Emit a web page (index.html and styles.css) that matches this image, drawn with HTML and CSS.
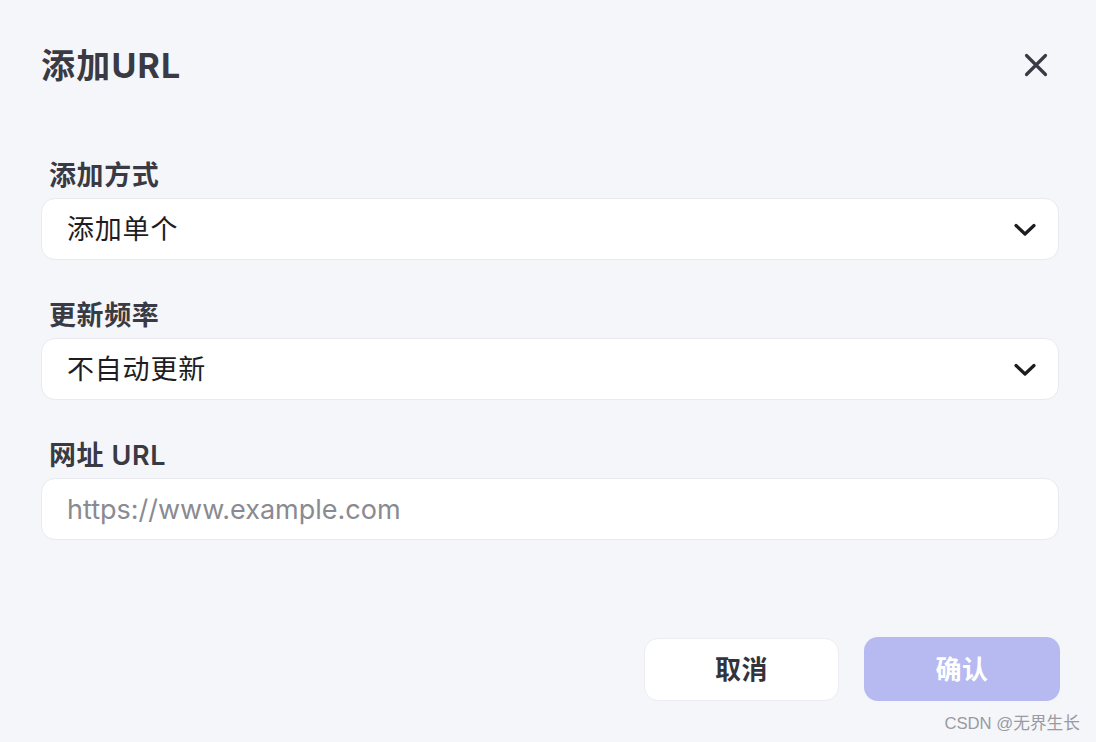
FILE: index.html
```html
<!DOCTYPE html>
<html lang="zh">
<head>
<meta charset="utf-8">
<link rel="stylesheet" href="styles.css">
</head>
<body>
<div class="dialog">
  <div class="header">
    <h1 class="title">添加URL</h1>
    <button class="close" aria-label="关闭">
      <svg width="24" height="24" viewBox="0 0 24 24"><path d="M2.5 2.5 L21.5 21.5 M21.5 2.5 L2.5 21.5" stroke="#3a3a44" stroke-width="3.2" stroke-linecap="round" fill="none"/></svg>
    </button>
  </div>
  <div class="form">
    <div class="field">
      <div class="label">添加方式</div>
      <div class="control select">
        <span class="value">添加单个</span>
        <svg class="chev" width="22" height="14" viewBox="0 0 22 14"><path d="M2 2.5 L11 11 L20 2.5" stroke="#1c1c20" stroke-width="3.2" stroke-linecap="round" stroke-linejoin="round" fill="none"/></svg>
      </div>
    </div>
    <div class="field">
      <div class="label">更新频率</div>
      <div class="control select">
        <span class="value">不自动更新</span>
        <svg class="chev" width="22" height="14" viewBox="0 0 22 14"><path d="M2 2.5 L11 11 L20 2.5" stroke="#1c1c20" stroke-width="3.2" stroke-linecap="round" stroke-linejoin="round" fill="none"/></svg>
      </div>
    </div>
    <div class="field">
      <div class="label">网址 URL</div>
      <div class="control input">
        <span class="placeholder">https://www.example.com</span>
      </div>
    </div>
  </div>
  <div class="footer">
    <button class="btn cancel">取消</button>
    <button class="btn confirm">确认</button>
  </div>
  <div class="watermark">CSDN @无界生长</div>
</div>
</body>
</html>
```
FILE: styles.css
```css
html, body {
  margin: 0;
  padding: 0;
}
body {
  background: #f5f6fa;
  font-family: "Inter", "Noto Sans CJK SC", sans-serif;
  width: 1096px;
  height: 742px;
  overflow: hidden;
}
.dialog {
  padding: 46px 36px 0 41px;
  display: flex;
  flex-direction: column;
  height: 742px;
  box-sizing: border-box;
}
.header {
  display: flex;
  align-items: center;
  justify-content: space-between;
  height: 40px;
}
.title {
  margin: 0;
  font-size: 34px;
  line-height: 40px;
  font-weight: 700;
  color: #3a3a44;
  letter-spacing: 1.2px;
}
.close {
  border: none;
  background: none;
  padding: 0;
  width: 24px;
  height: 24px;
  display: flex;
  margin-right: 12px;
  margin-top: -2px;
}
.form {
  margin-top: 74px;
  display: flex;
  flex-direction: column;
  gap: 40px;
  padding-right: 1px;
}
.field {
  display: flex;
  flex-direction: column;
  gap: 6px;
}
.label {
  padding-left: 8px;
  font-size: 27px;
  line-height: 32px;
  font-weight: 600;
  color: #3a3a44;
  letter-spacing: 0.6px;
}
.control {
  height: 62px;
  box-sizing: border-box;
  background: #fff;
  border: 1.5px solid #e9e9ef;
  border-radius: 14px;
  display: flex;
  align-items: center;
  justify-content: space-between;
  padding: 0 22px 0 25px;
  font-size: 27px;
}
.value {
  color: #1d1d22;
  letter-spacing: 0.8px;
  margin-top: -3px;
}
.placeholder {
  color: #8a8a92;
}
.chev {
  margin-top: 2px;
}
.footer {
  margin-top: 97px;
  display: flex;
  justify-content: flex-end;
  gap: 25px;
}
.btn {
  font-family: "Noto Sans CJK SC", sans-serif;
  font-size: 26px;
  font-weight: 700;
  border-radius: 14px;
  height: 63px;
  cursor: pointer;
  padding: 0 0 4px;
  letter-spacing: 0.5px;
}
.cancel {
  width: 195px;
  background: #fff;
  border: 1.5px solid #ececf2;
  color: #33333b;
  margin-top: 1px;
}
.confirm {
  width: 196px;
  height: 64px;
  background: #b6baf0;
  border: none;
  color: #fff;
}
.watermark {
  align-self: flex-end;
  margin-top: 9px;
  margin-right: -20px;
  font-family: "Liberation Sans", "Noto Sans CJK SC", sans-serif;
  font-size: 16.7px;
  color: #9a9aa0;
}
```
